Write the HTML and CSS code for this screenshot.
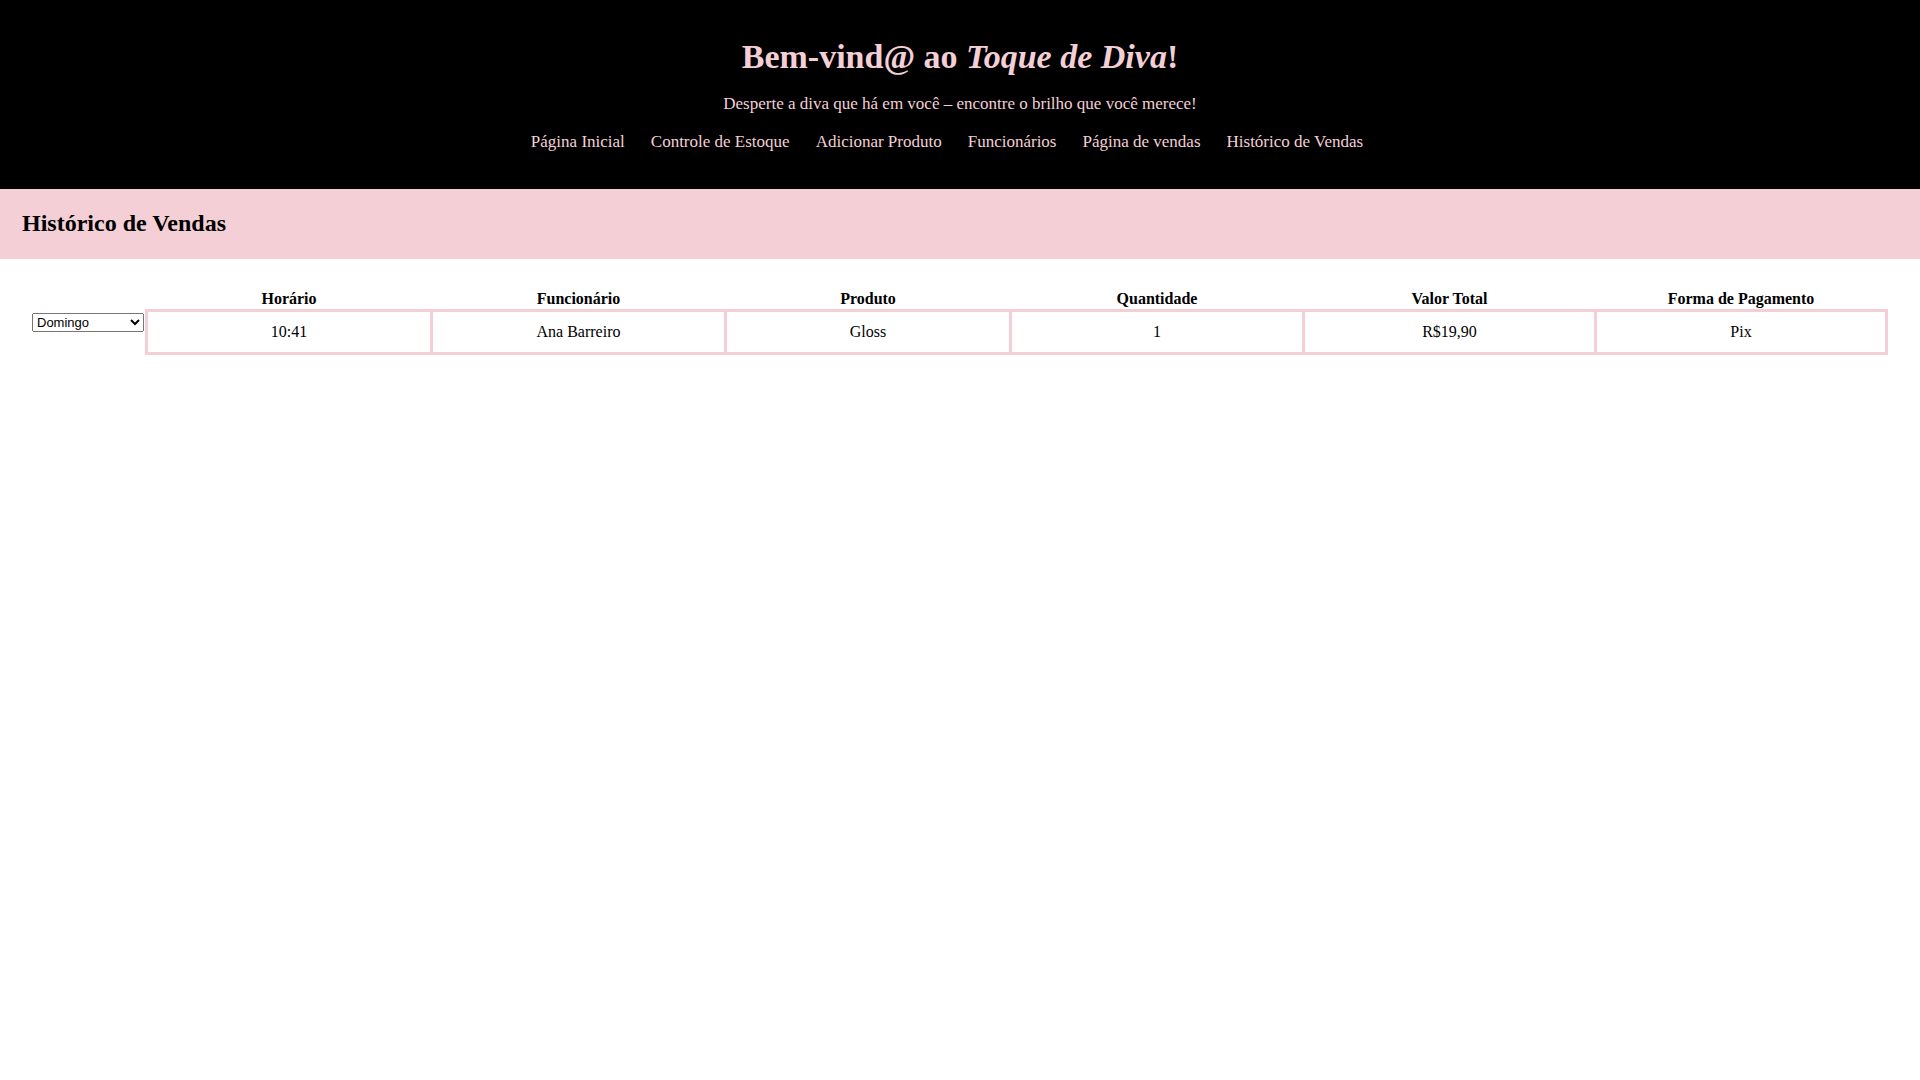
FILE: index.html
```html
<!DOCTYPE html>
<html lang="pt-BR">
<head>
<meta charset="utf-8">
<title>Toque de Diva - Histórico de Vendas</title>
<link rel="stylesheet" href="styles.css">
</head>
<body>
<header class="site-header">
  <h1 class="site-title">Bem-vind@ ao <em>Toque de Diva</em>!</h1>
  <p class="site-tagline">Desperte a diva que há em você – encontre o brilho que você merece!</p>
  <nav class="site-nav">
    <a href="#">Página Inicial</a>
    <a href="#">Controle de Estoque</a>
    <a href="#">Adicionar Produto</a>
    <a href="#">Funcionários</a>
    <a href="#">Página de vendas</a>
    <a href="#">Histórico de Vendas</a>
  </nav>
</header>
<section class="page-band">
  <h2 class="page-title">Histórico de Vendas</h2>
</section>
<main class="content">
  <select class="day-select">
    <option>Domingo</option>
    <option>Segunda-feira</option>
    <option>Terça-feira</option>
    <option>Quarta-feira</option>
    <option>Quinta-feira</option>
    <option>Sexta-feira</option>
    <option>Sábado</option>
  </select>
  <div class="table-wrap">
    <table class="sales-table">
      <colgroup>
        <col class="col-hora">
        <col class="col-func">
        <col class="col-prod">
        <col class="col-qtd">
        <col class="col-valor">
        <col class="col-pag">
      </colgroup>
      <thead>
        <tr>
          <th>Horário</th>
          <th>Funcionário</th>
          <th>Produto</th>
          <th>Quantidade</th>
          <th>Valor Total</th>
          <th>Forma de Pagamento</th>
        </tr>
      </thead>
      <tbody>
        <tr>
          <td>10:41</td>
          <td>Ana Barreiro</td>
          <td>Gloss</td>
          <td>1</td>
          <td>R$19,90</td>
          <td>Pix</td>
        </tr>
      </tbody>
    </table>
  </div>
</main>
</body>
</html>
```
FILE: styles.css
```css
html, body {
  margin: 0;
  padding: 0;
  background: #ffffff;
}
body {
  font-family: "Liberation Serif", "Times New Roman", serif;
  color: #000;
}
.site-header {
  background: #000000;
  color: #f4cfd6;
  text-align: center;
  padding: 37px 0 37px;
  font-family: "Liberation Serif", serif;
}
.site-title {
  margin: 0;
  font-size: 34px;
  line-height: 40px;
  font-weight: bold;
}
.site-title em {
  font-style: italic;
}
.site-tagline {
  margin: 17px 0 0;
  font-size: 17px;
  line-height: 20px;
}
.site-nav {
  margin-top: 18px;
  display: flex;
  justify-content: center;
  font-size: 17px;
  line-height: 20px;
}
.site-nav a {
  color: #f4cfd6;
  text-decoration: none;
  margin-right: 26px;
}
.page-band {
  background: #f4cfd6;
  padding: 20px 22px;
  height: 30px;
}
.page-title {
  margin: 0;
  font-size: 24px;
  line-height: 28px;
  font-weight: bold;
}
.content {
  display: flex;
  align-items: flex-start;
  gap: 1px;
  padding: 28px 32px 0 32px;
}
.day-select {
  width: 112px;
  height: 19px;
  margin-top: 26px;
  font-family: "Liberation Sans", Arial, sans-serif;
  font-size: 13px;
  flex: none;
}
.table-wrap {
  flex: 1;
  min-width: 0;
}
.sales-table {
  width: 100%;
  border-collapse: collapse;
  table-layout: fixed;
  font-size: 16px;
}
.col-hora { width: 285px; }
.col-func { width: 294px; }
.col-prod { width: 285px; }
.col-qtd { width: 293px; }
.col-valor { width: 292px; }
.sales-table th {
  font-weight: bold;
  padding: 2px 4px 1px;
  line-height: 19px;
  text-align: center;
}
.sales-table td {
  border: 3px solid #f4cfd6;
  padding: 10px 4px 11px;
  line-height: 19px;
  text-align: center;
}
```
